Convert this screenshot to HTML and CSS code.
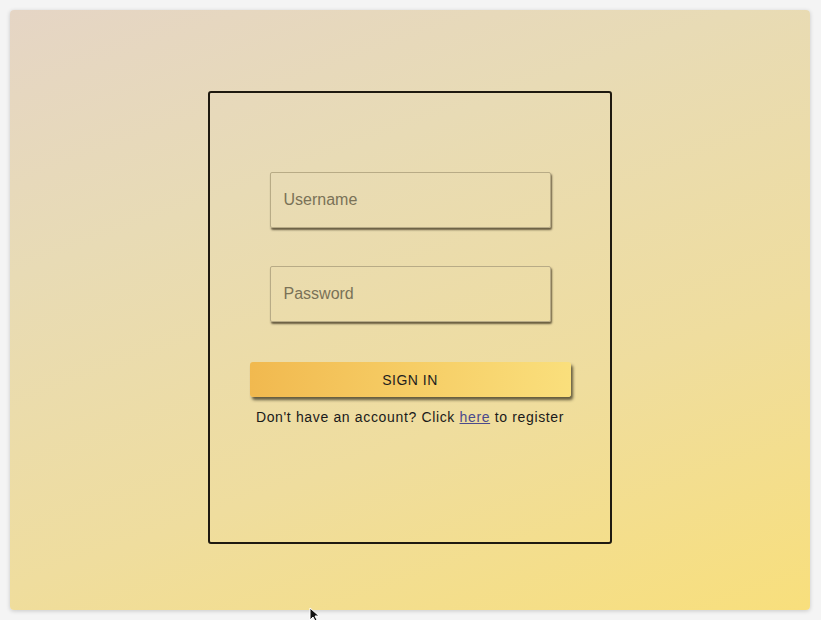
FILE: index.html
```html
<!DOCTYPE html>
<html>
<head>
<meta charset="utf-8">
<link rel="stylesheet" href="styles.css">
</head>
<body>
<div class="page">
  <div class="card">
    <form class="login">
      <input class="field" type="text" placeholder="Username">
      <input class="field field-pass" type="password" placeholder="Password">
      <button class="btn" type="button">SIGN IN</button>
      <p class="note">Don't have an account? Click <a href="#">here</a> to register</p>
    </form>
  </div>
  <svg class="cursor" width="12" height="16" viewBox="0 0 12 16"><path d="M1 1 L1 13 L4 10 L6.5 15 L8.5 14 L6 9 L10 9 Z" fill="#111" stroke="#fff" stroke-width="1"/></svg>
</div>
</body>
</html>
```
FILE: styles.css
```css
html, body {
  margin: 0;
  padding: 0;
  background: #f4f4f4;
  font-family: "Liberation Sans", Arial, sans-serif;
}
.page {
  position: relative;
  width: 821px;
  height: 620px;
  padding: 10px;
  box-sizing: border-box;
}
.card {
  width: 800px;
  height: 600px;
  border-radius: 4px;
  background: linear-gradient(160deg, #e5d5c5 0%, #e8dbb5 30%, #efdd9e 65%, #f8df7c 100%);
  box-shadow: 0 1px 4px rgba(0,0,0,0.18);
  display: flex;
  justify-content: flex-start;
  align-items: flex-start;
  padding: 81px 0 0 198px;
  box-sizing: border-box;
}
.login {
  width: 404px;
  height: 453px;
  box-sizing: border-box;
  border: 2px solid #1e1910;
  border-radius: 3px;
  display: flex;
  flex-direction: column;
  align-items: center;
  padding-top: 79px;
  margin: 0;
}
.field {
  width: 281px;
  height: 56px;
  box-sizing: border-box;
  border: 1px solid #b8ab86;
  border-radius: 2px;
  background: transparent;
  box-shadow: 1px 2px 2px rgba(60,50,30,0.75);
  padding: 0 13px;
  font-family: "Liberation Sans", Arial, sans-serif;
  font-size: 16px;
  color: #333;
  outline: none;
}
.field::placeholder {
  color: #7a7257;
}
.field-pass {
  margin-top: 38px;
}
.btn {
  margin-top: 40px;
  width: 321px;
  height: 35px;
  border: none;
  border-radius: 3px;
  background: linear-gradient(90deg, #f1b94f 0%, #f6cd65 50%, #fadf7c 100%);
  box-shadow: 2px 3px 3px rgba(40,35,20,0.7);
  font-family: "Liberation Sans", Arial, sans-serif;
  font-size: 14px;
  letter-spacing: 0.5px;
  color: #1e1e1e;
  padding: 0;
}
.note {
  margin: 11px 0 0;
  font-size: 14px;
  letter-spacing: 0.65px;
  color: #1a1a1a;
  line-height: 18px;
}
.note a {
  color: #4b4a8c;
  text-decoration: underline;
}
.cursor {
  position: absolute;
  left: 309px;
  top: 607px;
}
```
